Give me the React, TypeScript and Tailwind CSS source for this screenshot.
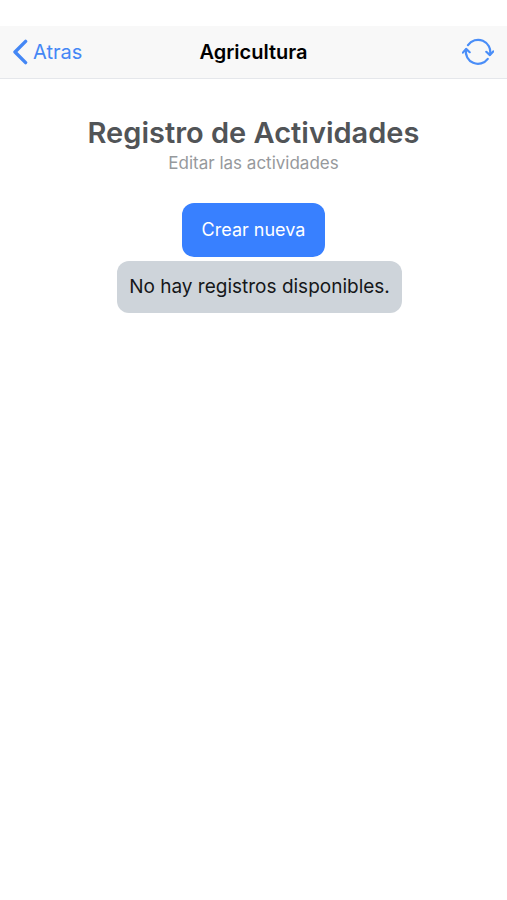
interface RecordListProps {
  records: string[];
}

const BackIcon: React.FC = () => (
  <svg className="h-7 w-4" viewBox="0 0 16 28" fill="none" aria-hidden="true">
    <path
      d="M12.6 3.4 2 14l10.600 10.600"
      stroke="currentColor"
      strokeWidth="3.4"
      strokeLinecap="round"
      strokeLinejoin="round"
    />
  </svg>
);

const SyncIcon: React.FC = () => (
  <svg
    className="h-7 w-8"
    viewBox="0 0 32 28"
    fill="none"
    stroke="currentColor"
    strokeWidth="2.2"
    strokeLinecap="round"
    strokeLinejoin="round"
    aria-hidden="true"
  >
    <path d="M6 7.1A12.2 12.2 0 0 1 28 16.5" />
    <path d="m24.3 13.8 3.6 3.3 3.3-3.7" />
    <path d="M25.8 20.9A12.2 12.2 0 0 1 4 11.5" />
    <path d="M7.7 14.2 4.1 10.9.9 14.6" />
  </svg>
);

const Header: React.FC = () => {
  return (
    <header className="mt-[26px] grid h-[53px] grid-cols-[1fr_auto_1fr] items-center border-b border-gray-200 bg-[#f8f8f8] px-[13px]">
      <button
        type="button"
        className="flex items-center gap-1 justify-self-start text-xl text-[#4487f5]"
      >
        <BackIcon />
        Atras
      </button>
      <h1 className="text-xl font-semibold text-black">Agricultura</h1>
      <button
        type="button"
        aria-label="Actualizar"
        className="justify-self-end text-[#4a8ef8]"
      >
        <SyncIcon />
      </button>
    </header>
  );
};

const RecordList: React.FC<RecordListProps> = ({ records }) => {
  if (records.length === 0) {
    return (
      <p className="mt-1 ml-3 rounded-xl bg-[#ced4da] px-3 py-3 text-[19px] leading-7 text-[#151719]">
        No hay registros disponibles.
      </p>
    );
  }

  return (
    <ul className="mt-1 w-full px-3">
      {records.map((record) => (
        <li key={record} className="py-3 text-[19px] leading-7">
          {record}
        </li>
      ))}
    </ul>
  );
};

export default function App() {
  return (
    <div className="min-h-screen overflow-hidden bg-white font-['Inter',sans-serif]">
      <Header />
      <main className="flex flex-col items-center pt-9">
        <h2 className="text-[29px] leading-9 font-semibold text-[#515457]">
          Registro de Actividades
        </h2>
        <p className="text-[17px] leading-6 text-[#96999c]">
          Editar las actividades
        </p>
        <button
          type="button"
          className="mt-7 rounded-xl bg-[#3880ff] px-5 py-[13px] text-lg text-white"
        >
          Crear nueva
        </button>
        <RecordList records={[]} />
      </main>
    </div>
  );
}
